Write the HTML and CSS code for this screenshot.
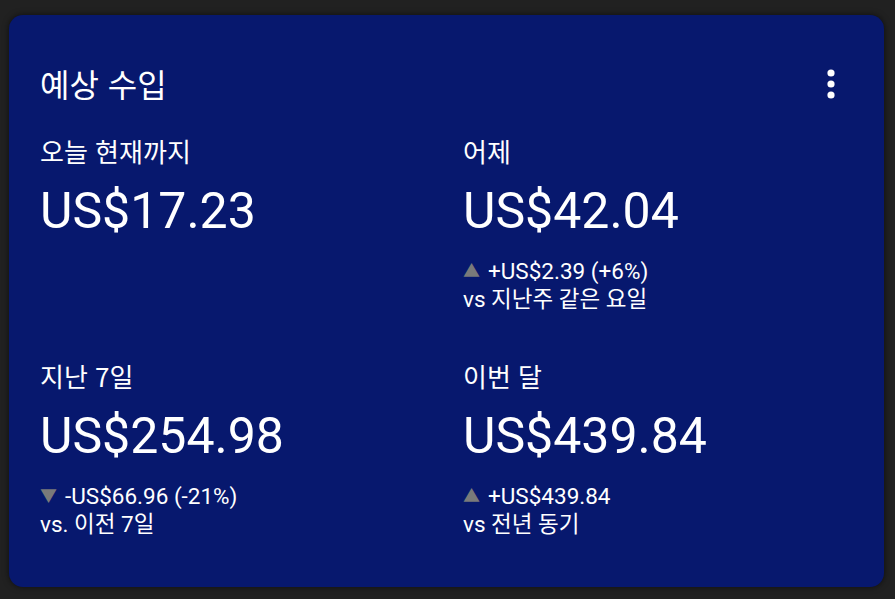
FILE: index.html
```html
<!DOCTYPE html>
<html lang="ko">
<head>
<meta charset="utf-8">
<link rel="stylesheet" href="styles.css">
</head>
<body>
<div class="card">
  <div class="header">
    <h1 class="title">예상 수입</h1>
    <svg class="kebab" width="10" height="30" viewBox="0 0 10 30"><circle cx="5" cy="4" r="3.6" fill="#fff"/><circle cx="5" cy="15" r="3.6" fill="#fff"/><circle cx="5" cy="26" r="3.6" fill="#fff"/></svg>
  </div>
  <div class="grid">
    <div class="cell">
      <div class="label">오늘 현재까지</div>
      <div class="amount">US$17.23</div>
    </div>
    <div class="cell">
      <div class="label">어제</div>
      <div class="amount">US$42.04</div>
      <div class="delta"><span class="tri">▲</span>+US$2.39 (+6%)</div>
      <div class="vs">vs 지난주 같은 요일</div>
    </div>
    <div class="cell">
      <div class="label">지난 7일</div>
      <div class="amount">US$254.98</div>
      <div class="delta"><span class="tri">▼</span>-US$66.96 (-21%)</div>
      <div class="vs">vs. 이전 7일</div>
    </div>
    <div class="cell">
      <div class="label">이번 달</div>
      <div class="amount">US$439.84</div>
      <div class="delta"><span class="tri">▲</span>+US$439.84</div>
      <div class="vs">vs 전년 동기</div>
    </div>
  </div>
</div>
</body>
</html>
```
FILE: styles.css
```css
html, body {
  margin: 0;
  padding: 0;
  background: #212121;
}
body {
  padding: 15px 11px 12px 9px;
  font-family: Roboto, "Noto Sans CJK KR", sans-serif;
  color: #fff;
}
.card {
  background: #07186e;
  border-radius: 14px;
  height: 572px;
  box-sizing: border-box;
  padding: 50px 31px 0 31px;
  box-shadow: 0 0 6px rgba(0,0,0,0.6);
}
.header {
  display: flex;
  justify-content: space-between;
  align-items: center;
  height: 36px;
}
.title {
  margin: 0;
  font-weight: 400;
  font-size: 32px;
  line-height: 36px;
  font-family: "Noto Sans CJK KR", sans-serif;
}
.kebab {
  margin-right: 17px;
  margin-top: 1px;
}
.grid {
  display: grid;
  grid-template-columns: 423px 1fr;
  grid-auto-rows: 225px;
  margin-top: 33px;
}
.label {
  font-family: "Noto Sans CJK KR", sans-serif;
  font-size: 26px;
  line-height: 34px;
}
.amount {
  font-size: 50px;
  line-height: 58px;
  margin-top: 14px;
}
.delta {
  font-size: 22.5px;
  line-height: 28px;
  margin-top: 17px;
}
.tri {
  color: #7a7a7a;
  font-size: 17px;
  margin-right: 8px;
  vertical-align: 2px;
}
.vs {
  font-family: Roboto, "Noto Sans CJK KR", sans-serif;
  font-size: 22.5px;
  line-height: 28px;
}
```
